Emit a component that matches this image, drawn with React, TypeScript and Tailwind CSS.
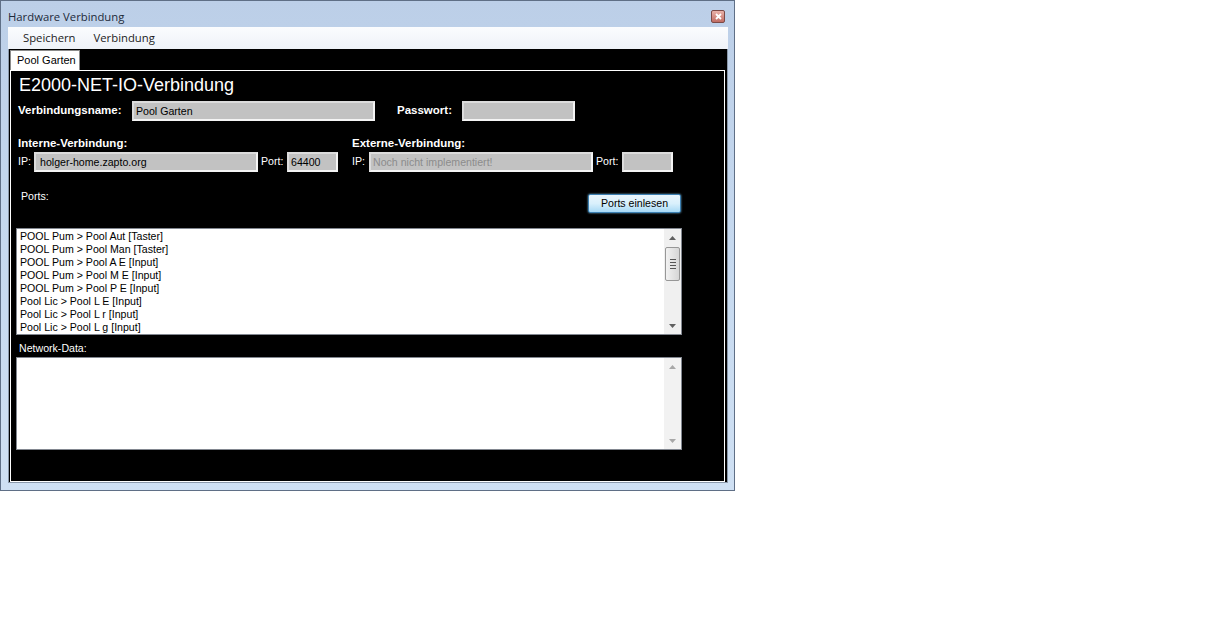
import React from "react";

const UI = { fontFamily: '"Liberation Sans", Arial, sans-serif' };
const SEG = { fontFamily: '"Open Sans", "Noto Sans", sans-serif' };

function Input({ w, text, muted, pl = "pl-[2px]" }: { w: string; text?: string; muted?: boolean; pl?: string }) {
  return (
    <div
      className={`${w} ${pl} shrink-0 h-[20px] bg-[#c2c2c2] border-2 border-t-[#dcdcdc] border-l-[#dcdcdc] border-b-[#f4f4f4] border-r-[#f4f4f4] flex items-center text-[10.6px] leading-[13px] whitespace-nowrap ${muted ? "text-[#8c8c8c]" : "text-black"}`}
    >
      {text}
    </div>
  );
}

function UpArrow({ c }: { c: string }) {
  return (
    <svg width="7" height="4" viewBox="0 0 7 4">
      <path d="M0 4 L3.5 0 L7 4 Z" fill={c} />
    </svg>
  );
}
function DownArrow({ c }: { c: string }) {
  return (
    <svg width="7" height="4" viewBox="0 0 7 4">
      <path d="M0 0 L3.5 4 L7 0 Z" fill={c} />
    </svg>
  );
}

const items = [
  "POOL Pum > Pool Aut [Taster]",
  "POOL Pum > Pool Man [Taster]",
  "POOL Pum > Pool A E [Input]",
  "POOL Pum > Pool M E [Input]",
  "POOL Pum > Pool P E [Input]",
  "Pool Lic > Pool L E [Input]",
  "Pool Lic > Pool L r [Input]",
  "Pool Lic > Pool L g [Input]",
];

export default function App() {
  return (
    <div className="w-[1218px] h-[633px] bg-white" style={UI}>
      <div className="w-[735px] h-[491px] border border-[#5f6f86] bg-gradient-to-b from-[#bccfe8] via-[#c6d9ef] to-[#cfe0f3] flex flex-col">
        {/* title bar */}
        <div className="h-[26px] shrink-0 flex items-start justify-between pl-[7px] pr-[9px]">
          <div className="mt-[8px] text-[11.3px] leading-[16px] text-[#1e2a3a]" style={SEG}>
            Hardware Verbindung
          </div>
          <div className="mt-[9px] w-[14px] h-[13px] rounded-[2px] border border-[#7b4a47] bg-gradient-to-b from-[#e9b2aa] to-[#c06c63] flex items-center justify-center">
            <svg width="7" height="7" viewBox="0 0 7 7">
              <path d="M1 1 L6 6 M6 1 L1 6" stroke="white" strokeWidth="1.8" />
            </svg>
          </div>
        </div>
        {/* client */}
        <div className="h-[456px] shrink-0 ml-[7px] mr-[6px] flex flex-col bg-black">
          {/* menu */}
          <div className="h-[22px] shrink-0 bg-gradient-to-b from-[#fbfcfe] to-[#eef2f8] flex items-center text-[11.3px] text-[#1b1b1b]" style={SEG}>
            <span className="ml-[15px]">Speichern</span>
            <span className="ml-[18px]">Verbindung</span>
          </div>
          <div className="flex-1 flex flex-col bg-black border-l border-r border-b border-[#8a98aa]">
            {/* tab header */}
            <div className="h-[21px] shrink-0 flex items-end pl-[1px]">
              <div className="w-[70px] h-[20px] bg-white border-t border-l border-r border-[#8c8c8c] flex items-center pl-[6px] text-[11px] text-black whitespace-nowrap">
                Pool Garten
              </div>
            </div>
            {/* tab page */}
            <div className="ml-[1px] mr-[2px] h-[412px] shrink-0 border border-white bg-black flex flex-col">
              <div className="mt-[3px] ml-[8px] text-[18px] leading-[22px] text-white">E2000-NET-IO-Verbindung</div>

              <div className="mt-[5px] ml-[7px] flex items-center">
                <div className="w-[114px] shrink-0 text-[11.5px] font-bold text-white">Verbindungsname:</div>
                <Input w="w-[243px]" text="Pool Garten" />
                <div className="ml-[22px] w-[65px] shrink-0 text-[11.5px] font-bold text-white">Passwort:</div>
                <Input w="w-[113px]" />
              </div>

              <div className="mt-[16px] ml-[7px] flex text-[11.5px] leading-[13px] font-bold text-white">
                <div className="w-[334px]">Interne-Verbindung:</div>
                <div>Externe-Verbindung:</div>
              </div>

              <div className="mt-[2px] ml-[7px] flex items-center text-[10.6px] text-white">
                <div className="w-[16px] shrink-0">IP:</div>
                <Input w="w-[224px]" text="holger-home.zapto.org" pl="pl-[4px]" />
                <div className="ml-[3px] w-[26px] shrink-0">Port:</div>
                <Input w="w-[51px]" text="64400" />
                <div className="ml-[14px] w-[17px] shrink-0">IP:</div>
                <Input w="w-[224px]" text="Noch nicht implementiert!" muted />
                <div className="ml-[3px] w-[26px] shrink-0">Port:</div>
                <Input w="w-[51px]" />
              </div>

              <div className="mt-[18px] ml-[10px] flex items-start">
                <div className="w-[567px] text-[10.6px] leading-[13px] text-white">Ports:</div>
                <div className="mt-[4px] w-[93px] h-[19px] rounded-[2px] border border-[#3c7fb1] bg-gradient-to-b from-[#eaf6fd] via-[#d9f0fc] to-[#a7d9f5] shadow-[0_0_2px_#7ec4ea] flex items-center justify-center text-[10.6px] text-black">
                  Ports einlesen
                </div>
              </div>

              {/* listbox */}
              <div className="mt-[15px] ml-[5px] w-[666px] h-[107px] shrink-0 border border-[#828790] bg-white flex">
                <div className="flex-1 pl-[3px] pt-[1px] text-[10.6px] leading-[13px] text-black overflow-hidden">
                  {items.map((t) => (
                    <div key={t}>{t}</div>
                  ))}
                </div>
                <div className="w-[17px] bg-[#f0f0f0] flex flex-col items-center">
                  <div className="h-[17px] flex items-center justify-center">
                    <UpArrow c="#606060" />
                  </div>
                  <div className="mt-[1px] w-[15px] h-[34px] rounded-[2px] border border-[#979797] bg-gradient-to-r from-[#f2f2f2] to-[#d6d6d6] flex flex-col items-center justify-center gap-[2px]">
                    <div className="w-[6px] h-[1px] bg-[#555]" />
                    <div className="w-[6px] h-[1px] bg-[#555]" />
                    <div className="w-[6px] h-[1px] bg-[#555]" />
                    <div className="w-[6px] h-[1px] bg-[#555]" />
                  </div>
                  <div className="flex-1" />
                  <div className="h-[17px] flex items-center justify-center">
                    <DownArrow c="#606060" />
                  </div>
                </div>
              </div>

              <div className="mt-[7px] ml-[8px] text-[10.6px] leading-[13px] text-white">Network-Data:</div>

              {/* textarea */}
              <div className="mt-[2px] ml-[5px] w-[666px] h-[93px] shrink-0 border border-[#828790] bg-white flex">
                <div className="flex-1" />
                <div className="w-[17px] bg-[#f2f2f2] flex flex-col items-center">
                  <div className="h-[17px] flex items-center justify-center">
                    <UpArrow c="#a8a8a8" />
                  </div>
                  <div className="flex-1" />
                  <div className="h-[17px] flex items-center justify-center">
                    <DownArrow c="#a8a8a8" />
                  </div>
                </div>
              </div>
            </div>
          </div>
        </div>
      </div>
    </div>
  );
}
